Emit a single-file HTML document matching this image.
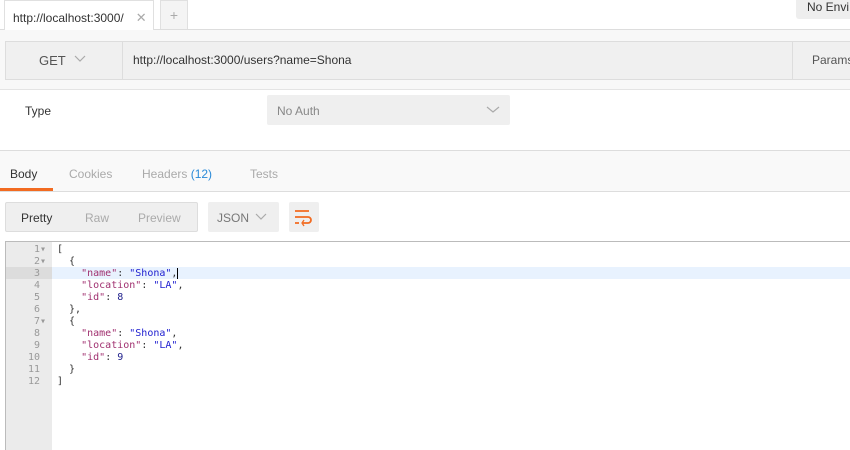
<!DOCTYPE html>
<html><head><style>
*{margin:0;padding:0;box-sizing:border-box}
body{width:850px;height:450px;overflow:hidden;background:#fff;font-family:"Liberation Sans",sans-serif;position:relative;color:#505050}
.a{position:absolute}
.code{font-family:"DejaVu Sans Mono",monospace;font-size:10px;line-height:12px;white-space:pre}
.k{color:#a0306f}.s{color:#2020d0}.n{color:#1d1d8a}
</style></head><body>
<div class="a" style="left:0;top:29px;width:850px;height:1px;background:#ddd"></div>
<div class="a" style="left:4px;top:0;width:150px;height:30px;background:#fff;border:1px solid #e0e0e0;border-bottom:none;font-size:12px;color:#333;padding:9px 0 0 8px">http://localhost:3000/<span style="color:#aaa;margin-left:12px;font-size:13px">✕</span></div>
<div class="a" style="left:160px;top:0;width:28px;height:29px;background:#f4f4f4;border:1px solid #e0e0e0;border-bottom:none;color:#aaa;text-align:center;font-size:14px;padding-top:6px">+</div>
<div class="a" style="left:796px;top:-4px;width:60px;height:23px;background:#eee;border-radius:3px;font-size:12px;color:#333;padding:0 0 0 11px;line-height:23px">No Envi</div>
<div class="a" style="left:0;top:30px;width:850px;height:60px;background:#f8f8f8;border-bottom:1px solid #e4e4e4"></div>
<div class="a" style="left:5px;top:41px;width:850px;height:39px;background:#f0f0f0;border:1px solid #ddd"></div>
<div class="a" style="left:122px;top:41px;width:1px;height:39px;background:#ddd"></div>
<div class="a" style="left:792px;top:41px;width:1px;height:39px;background:#ddd"></div>
<div class="a" style="left:39px;top:53px;font-size:13px;color:#555">GET</div>
<svg class="a" style="left:74px;top:55px" width="12" height="8"><path d="M1 1L6 6L11 1" stroke="#aaa" fill="none" stroke-width="1.2"/></svg>
<div class="a" style="left:133px;top:53px;font-size:12px;color:#333">http://localhost:3000/users?name=Shona</div>
<div class="a" style="left:812px;top:53px;font-size:12px;color:#555">Params</div>
<div class="a" style="left:25px;top:104px;font-size:12px;color:#333">Type</div>
<div class="a" style="left:267px;top:95px;width:243px;height:30px;background:#efefef;border-radius:2px"></div>
<div class="a" style="left:277px;top:104px;font-size:12px;color:#888">No Auth</div>
<svg class="a" style="left:486px;top:106px" width="14" height="8"><path d="M1 1L7 6L13 1" stroke="#aaa" fill="none" stroke-width="1.2"/></svg>
<div class="a" style="left:0;top:150px;width:850px;height:42px;background:#f9f9f9;border-top:1px solid #ddd;border-bottom:1px solid #ddd"></div>
<div class="a" style="left:10px;top:167px;font-size:12px;color:#333">Body</div>
<div class="a" style="left:69px;top:167px;font-size:12px;color:#aaa">Cookies</div>
<div class="a" style="left:142px;top:167px;font-size:12px;color:#aaa">Headers <span style="color:#2a8ad8">(12)</span></div>
<div class="a" style="left:250px;top:167px;font-size:12px;color:#aaa">Tests</div>
<div class="a" style="left:0;top:188px;width:53px;height:3px;background:#f26b21"></div>
<div class="a" style="left:5px;top:202px;width:193px;height:30px;background:#efefef;border:1px solid #ddd;border-radius:2px"></div>
<div class="a" style="left:21px;top:211px;font-size:12px;color:#333">Pretty</div>
<div class="a" style="left:85px;top:211px;font-size:12px;color:#aaa">Raw</div>
<div class="a" style="left:138px;top:211px;font-size:12px;color:#aaa">Preview</div>
<div class="a" style="left:208px;top:202px;width:71px;height:30px;background:#efefef;border-radius:2px"></div>
<div class="a" style="left:217px;top:211px;font-size:12px;color:#777">JSON</div>
<svg class="a" style="left:255px;top:213px" width="12" height="8"><path d="M1 1L6 6L11 1" stroke="#aaa" fill="none" stroke-width="1.2"/></svg>
<div class="a" style="left:289px;top:202px;width:30px;height:30px;background:#efefef;border-radius:2px"></div>
<svg class="a" style="left:294px;top:207px" width="20" height="20"><path d="M1 4H15M1 10H14a3 3 0 0 1 0 6H9M1 16H5" stroke="#f26b21" fill="none" stroke-width="1.8"/><path d="M10 13L8 16L10 19" stroke="#f26b21" fill="none" stroke-width="1.3"/></svg>
<div class="a" style="left:5px;top:241px;width:845px;height:209px;border-top:1px solid #bbb;border-left:1px solid #bbb"></div>
<div class="a" style="left:6px;top:242px;width:46px;height:208px;background:#ebebeb"></div>
<div class="a" style="left:6px;top:267px;width:46px;height:12px;background:#dcdcdc"></div>
<div class="a" style="left:52px;top:267px;width:798px;height:12px;background:#e8f2fe"></div>
<div class="a code" style="left:6px;top:244px;width:40px;text-align:right;color:#999">1▾
2▾
3 
4 
5 
6 
7▾
8 
9 
10 
11 
12 </div>
<div class="a code" style="left:57px;top:244px;color:#333">[
  {
    <span class="k">"name"</span>: <span class="s">"Shona"</span>,<span style="border-left:1.5px solid #000"></span>
    <span class="k">"location"</span>: <span class="s">"LA"</span>,
    <span class="k">"id"</span>: <span class="n">8</span>
  },
  {
    <span class="k">"name"</span>: <span class="s">"Shona"</span>,
    <span class="k">"location"</span>: <span class="s">"LA"</span>,
    <span class="k">"id"</span>: <span class="n">9</span>
  }
]</div>
</body></html>
